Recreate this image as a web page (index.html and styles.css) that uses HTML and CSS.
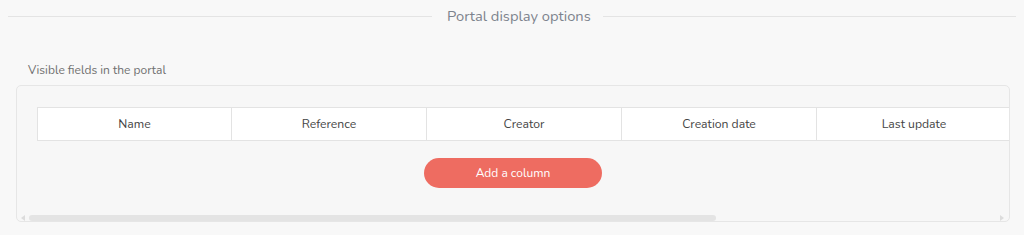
FILE: index.html
```html
<!DOCTYPE html>
<html>
<head>
<meta charset="utf-8">
<link rel="stylesheet" href="styles.css">
</head>
<body>
<div class="divider">
  <span class="divider-line line-left"></span>
  <span class="divider-text">Portal display options</span>
  <span class="divider-line line-right"></span>
</div>
<div class="field-label">Visible fields in the portal</div>
<div class="box">
  <div class="viewport">
    <div class="table">
      <div class="cell">Name</div>
      <div class="cell">Reference</div>
      <div class="cell">Creator</div>
      <div class="cell">Creation date</div>
      <div class="cell">Last update</div>
    </div>
  </div>
  <div class="actions">
    <button class="btn">Add a column</button>
  </div>
  <div class="scrollbar">
    <span class="arrow arrow-left"></span>
    <div class="track"><div class="thumb"></div></div>
    <span class="arrow arrow-right"></span>
  </div>
</div>
</body>
</html>
```
FILE: styles.css
```css
html, body {
  margin: 0;
  padding: 0;
  background: #f8f8f8;
  font-family: "Nunito", "Lato", "Open Sans", sans-serif;
  width: 1024px;
  height: 235px;
  overflow: hidden;
}
.divider {
  display: flex;
  align-items: center;
  padding: 7px 8px 0 8px;
  height: 18px;
}
.divider-line {
  height: 1px;
  background: #e4e4e4;
}
.line-left { flex: 0 0 424px; }
.line-right { flex: 1; }
.divider-text {
  margin: 0 12px 0 15px;
  font-size: 14.7px;
  color: #7d838d;
}
.field-label {
  margin: 37px 0 0 28px;
  font-size: 12px;
  line-height: 16px;
  color: #6f6f6f;
}
.box {
  margin: 7px 0 0 16px;
  width: 992px;
  height: 135px;
  border: 1px solid #e6e6e6;
  border-radius: 5px;
  background: #f7f7f7;
  display: flex;
  flex-direction: column;
}
.viewport {
  overflow: hidden;
  padding: 21px 0 0 20px;
}
.table {
  display: flex;
  width: max-content;
  background: #fff;
  border: 1px solid #e3e3e3;
}
.cell {
  width: 194px;
  height: 32px;
  line-height: 32px;
  text-align: center;
  font-size: 12.2px;
  color: #444;
  border-left: 1px solid #e3e3e3;
}
.cell:first-child {
  border-left: none;
  width: 193px;
}
.actions {
  display: flex;
  justify-content: center;
  padding-top: 17px;
}
.btn {
  width: 178px;
  height: 30px;
  border: none;
  border-radius: 15px;
  background: #ee6c61;
  color: #fff;
  font-family: inherit;
  font-size: 12px;
  padding: 0;
}
.scrollbar {
  display: flex;
  align-items: center;
  gap: 4px;
  margin-top: 27px;
  padding: 0 5px 0 4px;
  height: 6px;
}
.track {
  flex: 1;
  height: 6px;
}
.thumb {
  width: 687px;
  height: 6px;
  border-radius: 3px;
  background: #e4e4e4;
}
.arrow {
  width: 0;
  height: 0;
  border-top: 3px solid transparent;
  border-bottom: 3px solid transparent;
}
.arrow-left { border-right: 4px solid #dcdcdc; }
.arrow-right { border-left: 4px solid #dcdcdc; }
```
